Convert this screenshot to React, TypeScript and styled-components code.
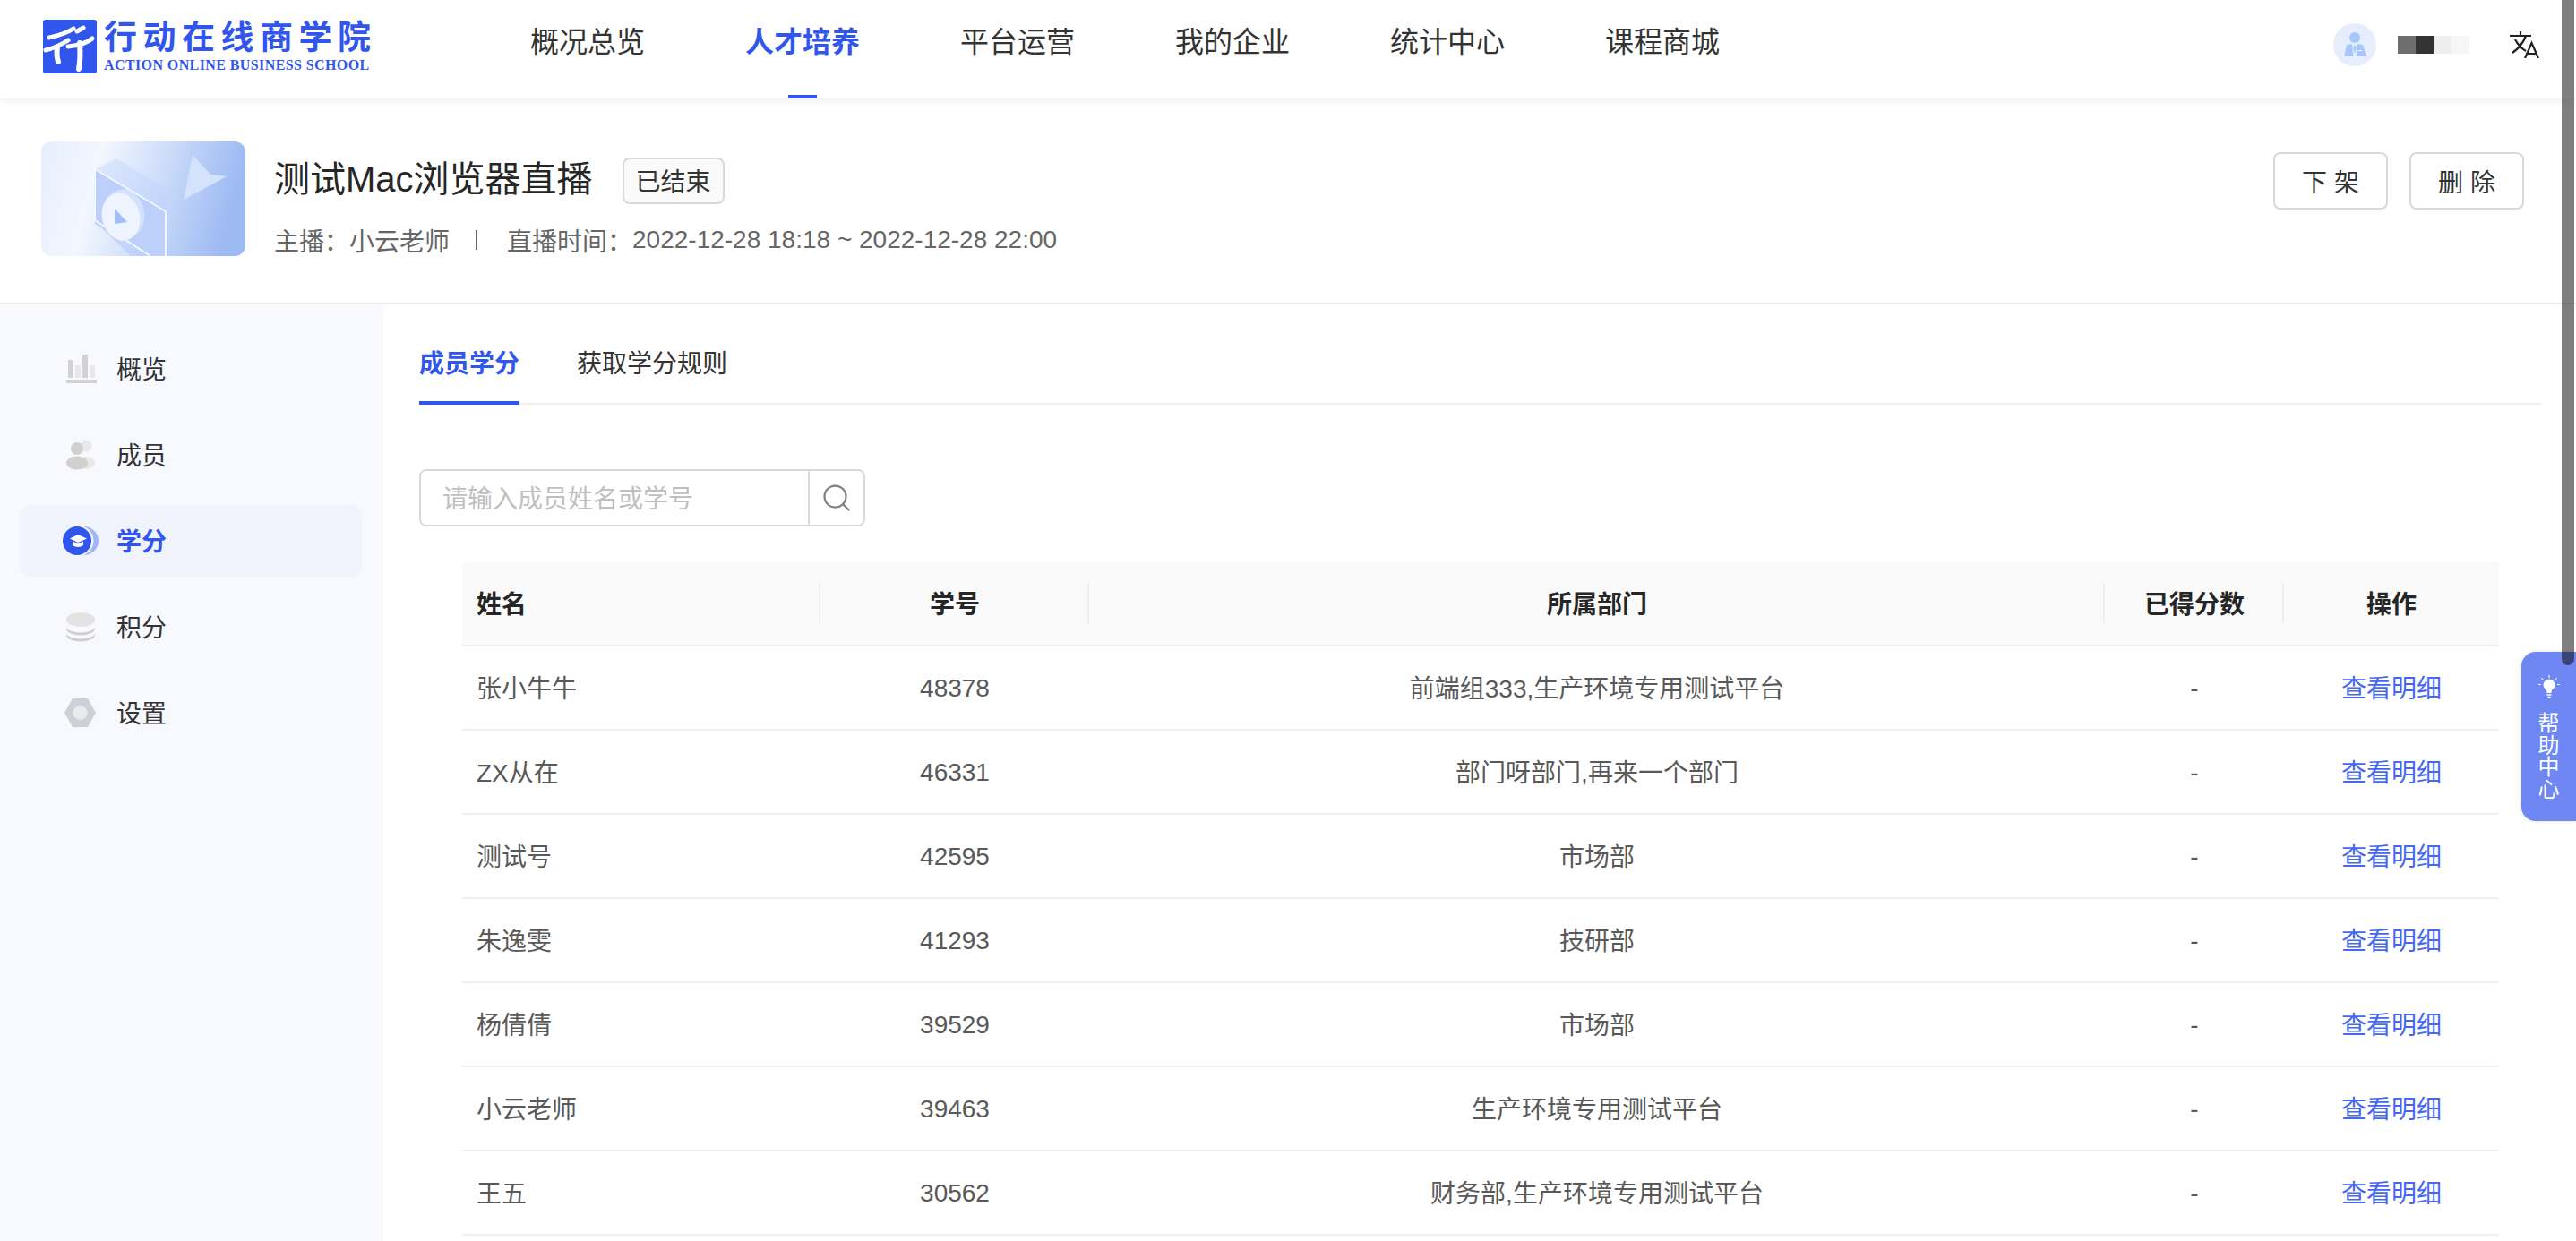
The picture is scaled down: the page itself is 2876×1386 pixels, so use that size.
import styled, { createGlobalStyle } from "styled-components";
import { Search } from "lucide-react";

const FONT = `"Liberation Sans", "Noto Sans CJK SC", sans-serif`;
const BLUE = "#3056ee";

const navItems = ["概况总览", "人才培养", "平台运营", "我的企业", "统计中心", "课程商城"];

const rows = [
  { name: "张小牛牛", no: "48378", dept: "前端组333,生产环境专用测试平台" },
  { name: "ZX从在", no: "46331", dept: "部门呀部门,再来一个部门" },
  { name: "测试号", no: "42595", dept: "市场部" },
  { name: "朱逸雯", no: "41293", dept: "技研部" },
  { name: "杨倩倩", no: "39529", dept: "市场部" },
  { name: "小云老师", no: "39463", dept: "生产环境专用测试平台" },
  { name: "王五", no: "30562", dept: "财务部,生产环境专用测试平台" },
];

function LogoMark() {
  return (
    <LogoSvg width="60" height="60" viewBox="0 0 60 60">
      <rect width="60" height="60" rx="3" fill={BLUE} />
      <g fill="none" stroke="#fff" strokeWidth="5" strokeLinecap="round">
        <path d="M7 20C15 18 25 16 34 10" />
        <path d="M3 34C12 32 20 28 28 23" />
        <path d="M16 30C15 38 16 44 17 47" strokeWidth="6" />
        <path d="M38 13L45 9" />
        <path d="M28 30C38 29 48 27 55 21" />
        <path d="M41 26C42 40 41 50 40 55" strokeWidth="6" />
      </g>
    </LogoSvg>
  );
}

function AvatarIcon() {
  return (
    <svg width="48" height="48" viewBox="0 0 48 48">
      <circle cx="24" cy="24" r="24" fill="#e6eefe" />
      <circle cx="24" cy="16" r="6" fill="#a9c6fb" />
      <path d="M15 24L21 23L22.500 37H12Z" fill="#a9c6fb" />
      <path d="M33 24L27 23L25.500 37H37Z" fill="#a9c6fb" />
      <path d="M24 24L26 27L24 34L22 27Z" fill="#a9c6fb" />
      <rect x="28" y="30" width="4" height="1" fill="#fff" />
    </svg>
  );
}

function TranslateIcon() {
  return (
    <svg width="34" height="30" viewBox="0 0 34 30" fill="none" stroke="#222" strokeWidth="2.2">
      <path d="M0 5H24M12 0V5" />
      <path d="M18 5C15 13 9 20 3 24" />
      <path d="M6 9C9 15 13 19 18 22" />
      <path d="M17 30L24.500 13L32 30M19.500 25H29.500" />
    </svg>
  );
}

function CoverArt() {
  return (
    <svg width="228" height="128" viewBox="0 0 228 128">
      <defs>
        <linearGradient id="coverBg" x1="0" y1="0" x2="1" y2="0.15">
          <stop offset="0" stopColor="#e6eefd" />
          <stop offset="0.3" stopColor="#f3f7fe" />
          <stop offset="0.6" stopColor="#cfdefa" />
          <stop offset="1" stopColor="#9dbaf3" />
        </linearGradient>
        <linearGradient id="coverFace" x1="0" y1="0" x2="1" y2="1">
          <stop offset="0" stopColor="#dfe9fd" />
          <stop offset="1" stopColor="#b4cbfa" />
        </linearGradient>
      </defs>
      <rect width="228" height="128" rx="12" fill="url(#coverBg)" />
      <path d="M60 31L84 19L139 52L143 128H100L60 90Z" fill="url(#coverFace)" />
      <path d="M60 31L139 79V128H122L60 92Z" fill="#bcd0fb" />
      <path d="M60 31L139 78V128M60 31V88L122 128" fill="none" stroke="#f3f7ff" strokeWidth="2" />
      <ellipse cx="94" cy="80" rx="21" ry="27" transform="rotate(-14 94 80)" fill="#d4e1fd" />
      <ellipse cx="89" cy="84" rx="21" ry="27" transform="rotate(-14 89 84)" fill="#eef4fe" />
      <path d="M82 75L96 90L82 92Z" fill="#a3bdf7" />
      <path d="M169 15L189 37L207 39L159 65Z" fill="#d5e2fc" />
    </svg>
  );
}

function BarsIcon() {
  return (
    <svg width="40" height="36" viewBox="0 0 40 36">
      <rect x="4" y="30" width="34" height="4" fill="#d2d2d2" />
      <rect x="6" y="8" width="6" height="20" fill="#d2d2d2" />
      <rect x="14" y="14" width="6" height="14" fill="#e8e8e8" />
      <rect x="22" y="2" width="6" height="26" fill="#d2d2d2" />
      <rect x="30" y="14" width="6" height="14" fill="#e8e8e8" />
    </svg>
  );
}

function MembersIcon() {
  return (
    <svg width="40" height="36" viewBox="0 0 40 36">
      <circle cx="26" cy="8" r="6.500" fill="#e9e9e9" />
      <ellipse cx="26" cy="27" rx="10" ry="7" fill="#e9e9e9" />
      <circle cx="16" cy="11" r="7" fill="#d0d0d0" />
      <ellipse cx="16" cy="27" rx="12" ry="7.500" fill="#d0d0d0" />
    </svg>
  );
}

function CreditIcon() {
  return (
    <svg width="40" height="36" viewBox="0 0 40 36">
      <circle cx="24" cy="18" r="16" fill="#a3b5f7" />
      <circle cx="17.500" cy="18" r="17" fill="#f1f4fd" />
      <circle cx="16" cy="18" r="16" fill={BLUE} />
      <path d="M17 11L27 15.500L17 20L8 15.500Z" fill="#fff" />
      <path d="M11 18.500V23C15 25.500 19 25.500 23 23V18.500L17 21.500Z" fill="#fff" />
    </svg>
  );
}

function CoinsIcon() {
  return (
    <svg width="40" height="36" viewBox="0 0 40 36">
      <ellipse cx="20" cy="27" rx="16" ry="7.500" fill="#d0d0d0" />
      <ellipse cx="20" cy="24.500" rx="16" ry="7" fill="#f8f9fe" />
      <ellipse cx="20" cy="20" rx="16" ry="7.500" fill="#d0d0d0" />
      <ellipse cx="20" cy="17.500" rx="16" ry="7" fill="#f8f9fe" />
      <ellipse cx="20" cy="10" rx="16" ry="8" fill="#e3e3e3" />
    </svg>
  );
}

function GearIcon() {
  return (
    <svg width="40" height="36" viewBox="0 0 40 36">
      <path d="M11 2H28L37 18L28 34H11L2 18Z" fill="#cdd0d9" />
      <circle cx="19.500" cy="18" r="8" fill="#e9eaee" />
    </svg>
  );
}

function BulbIcon() {
  return (
    <svg width="24" height="26" viewBox="0 0 24 26" fill="none" stroke="#fff" strokeWidth="1.200">
      <circle cx="12" cy="11" r="6.500" fill="#fff" stroke="none" />
      <path d="M9 15H15L14.500 20H9.500Z" fill="#fff" stroke="none" />
      <path d="M9.500 22H14.500M10.500 24.500H13.500" strokeWidth="1.500" />
      <path d="M12 0V3M3.500 3L5.500 5.500M20.500 3L18.500 5.500M0 10.500H3M21 10.500H24" />
    </svg>
  );
}

const sideItems = [
  { label: "概览", icon: <BarsIcon /> },
  { label: "成员", icon: <MembersIcon /> },
  { label: "学分", icon: <CreditIcon />, active: true },
  { label: "积分", icon: <CoinsIcon /> },
  { label: "设置", icon: <GearIcon /> },
];

export default function App() {
  return (
    <>
      <GlobalStyle />
      <Page>
        <TopBar>
          <Logo>
            <LogoMark />
            <LogoText>
              <LogoCn>行动在线商学院</LogoCn>
              <LogoEn>ACTION ONLINE BUSINESS SCHOOL</LogoEn>
            </LogoText>
          </Logo>
          <Nav>
            {navItems.map((item) => (
              <NavItem key={item} $active={item === "人才培养"}>
                {item}
              </NavItem>
            ))}
          </Nav>
          <UserArea>
            <AvatarIcon />
            <BlurName>
              <BlurCell $color="#6e6e6e" />
              <BlurCell $color="#333333" />
              <BlurCell $color="#eeeeee" />
              <BlurCell $color="#f6f6f6" />
            </BlurName>
            <TranslateBox>
              <TranslateIcon />
            </TranslateBox>
          </UserArea>
        </TopBar>

        <DetailHeader>
          <Cover>
            <CoverArt />
          </Cover>
          <Info>
            <TitleRow>
              <Title>测试Mac浏览器直播</Title>
              <StatusTag>已结束</StatusTag>
            </TitleRow>
            <Meta>
              <span>主播：小云老师</span>
              <MetaDivider />
              <span>直播时间：</span>
              <span>2022-12-28 18:18 ~ 2022-12-28 22:00</span>
            </Meta>
          </Info>
          <Actions>
            <ActionButton>下 架</ActionButton>
            <ActionButton>删 除</ActionButton>
          </Actions>
        </DetailHeader>

        <Body>
          <Sidebar>
            {sideItems.map((item) => (
              <SideItem key={item.label} $active={item.active}>
                {item.icon}
                <SideLabel $active={item.active}>{item.label}</SideLabel>
              </SideItem>
            ))}
          </Sidebar>

          <Content>
            <Tabs>
              <Tab $active>成员学分</Tab>
              <Tab>获取学分规则</Tab>
            </Tabs>

            <SearchBox>
              <SearchInput placeholder="请输入成员姓名或学号" />
              <SearchButton>
                <Search size={36} strokeWidth={1.5} color="#808080" />
              </SearchButton>
            </SearchBox>

            <Table>
              <HeadRow>
                <HeadCell $left>姓名</HeadCell>
                <HeadCell>学号</HeadCell>
                <HeadCell>所属部门</HeadCell>
                <HeadCell>已得分数</HeadCell>
                <HeadCell>操作</HeadCell>
              </HeadRow>
              {rows.map((row) => (
                <Row key={row.no}>
                  <Cell $left>{row.name}</Cell>
                  <NumberCell>{row.no}</NumberCell>
                  <Cell>{row.dept}</Cell>
                  <NumberCell>-</NumberCell>
                  <LinkCell>查看明细</LinkCell>
                </Row>
              ))}
            </Table>
          </Content>
        </Body>

        <HelpTab>
          <BulbIcon />
          <HelpText>帮助中心</HelpText>
        </HelpTab>
        <ScrollThumb />
      </Page>
    </>
  );
}

const GlobalStyle = createGlobalStyle`
  html, body {
    margin: 0;
    padding: 0;
    background: #fff;
    overflow: hidden;
  }

  * {
    box-sizing: border-box;
  }
`;

const Page = styled.div`
  position: relative;
  width: 2876px;
  height: 1386px;
  overflow: hidden;
  display: flex;
  flex-direction: column;
  font-family: ${FONT};
  color: #333;
  background: #fff;
`;

const TopBar = styled.header`
  position: relative;
  z-index: 2;
  flex: none;
  height: 110px;
  display: flex;
  padding: 0 40px 0 48px;
  background: #fff;
  box-shadow: 0 2px 8px rgba(0, 0, 0, 0.07);
`;

const Logo = styled.div`
  display: flex;
  align-items: flex-start;
  gap: 8px;
  padding-top: 22px;
  width: 366px;
  flex: none;
`;

const LogoSvg = styled.svg`
  flex: none;
`;

const LogoText = styled.div`
  display: flex;
  flex-direction: column;
  color: ${BLUE};
  white-space: nowrap;
`;

const LogoCn = styled.div`
  font-size: 37px;
  line-height: 42px;
  font-weight: 700;
  letter-spacing: 6.500px;
`;

const LogoEn = styled.div`
  font-family: "Liberation Serif", serif;
  font-size: 16px;
  line-height: 18px;
  font-weight: 700;
  letter-spacing: 0.400px;
`;

const Nav = styled.nav`
  display: flex;
  gap: 112px;
  margin-left: 178px;
`;

const NavItem = styled.div<{ $active?: boolean }>`
  position: relative;
  height: 110px;
  font-size: 32px;
  line-height: 94px;
  color: ${(props) => (props.$active ? BLUE : "#333")};
  font-weight: ${(props) => (props.$active ? 700 : 400)};

  &::after {
    content: "";
    display: ${(props) => (props.$active ? "block" : "none")};
    position: absolute;
    left: 48px;
    bottom: 0;
    width: 32px;
    height: 4px;
    background: ${BLUE};
  }
`;

const UserArea = styled.div`
  display: flex;
  align-items: center;
  margin-left: auto;
  height: 100px;
`;

const BlurName = styled.div`
  display: flex;
  margin-left: 24px;
`;

const BlurCell = styled.div<{ $color: string }>`
  width: 20px;
  height: 20px;
  background: ${(props) => props.$color};
`;

const TranslateBox = styled.div`
  display: flex;
  margin-left: 45px;
`;

const DetailHeader = styled.section`
  flex: none;
  height: 230px;
  display: flex;
  align-items: flex-start;
  padding: 48px 58px 0 46px;
  border-bottom: 2px solid #e8e8e8;
`;

const Cover = styled.div`
  width: 228px;
  height: 128px;
  flex: none;
  display: flex;
`;

const Info = styled.div`
  margin: 18px 0 0 32px;
`;

const TitleRow = styled.div`
  display: flex;
  align-items: center;
  height: 52px;
`;

const Title = styled.h1`
  margin: 0;
  padding-bottom: 3px;
  font-size: 40px;
  font-weight: 400;
  line-height: 49px;
  color: #262626;
`;

const StatusTag = styled.span`
  margin-left: 33px;
  width: 114px;
  height: 52px;
  display: flex;
  align-items: center;
  justify-content: center;
  padding-bottom: 2px;
  font-size: 28px;
  color: #333;
  background: #fafafa;
  border: 2px solid #d9d9d9;
  border-radius: 8px;
`;

const Meta = styled.div`
  display: flex;
  align-items: center;
  margin-top: 22px;
  height: 36px;
  font-size: 28px;
  color: #666;
  white-space: nowrap;
`;

const MetaDivider = styled.i`
  width: 2px;
  height: 22px;
  margin: 0 33px 0 29px;
  background: #666;
`;

const Actions = styled.div`
  display: flex;
  gap: 24px;
  margin: 12px 0 0 auto;
`;

const ActionButton = styled.button`
  width: 128px;
  height: 64px;
  padding: 0;
  font-family: ${FONT};
  font-size: 28px;
  color: #333;
  background: #fff;
  border: 2px solid #d9d9d9;
  border-radius: 8px;
  box-shadow: 0 2px 0 rgba(0, 0, 0, 0.02);
`;

const Body = styled.div`
  flex: 1;
  display: flex;
  min-height: 0;
`;

const Sidebar = styled.aside`
  flex: none;
  width: 428px;
  padding: 32px 24px 0 22px;
  display: flex;
  flex-direction: column;
  gap: 16px;
  background: #f8f9fe;
`;

const SideItem = styled.div<{ $active?: boolean }>`
  height: 80px;
  display: flex;
  align-items: center;
  gap: 20px;
  padding-left: 48px;
  border-radius: 12px;
  background: ${(props) => (props.$active ? "#f1f4fd" : "transparent")};
`;

const SideLabel = styled.span<{ $active?: boolean }>`
  padding-bottom: 3px;
  font-size: 28px;
  color: ${(props) => (props.$active ? BLUE : "#333")};
  font-weight: ${(props) => (props.$active ? 700 : 400)};
`;

const Content = styled.main`
  flex: 1;
  min-width: 0;
  padding: 0 39px 0 40px;
`;

const Tabs = styled.div`
  display: flex;
  gap: 64px;
  height: 112px;
  border-bottom: 2px solid #f0f0f0;
`;

const Tab = styled.div<{ $active?: boolean }>`
  height: 112px;
  padding-top: 42px;
  font-size: 28px;
  line-height: 50px;
  color: ${(props) => (props.$active ? BLUE : "#333")};
  font-weight: ${(props) => (props.$active ? 700 : 400)};
  border-bottom: 4px solid ${(props) => (props.$active ? BLUE : "transparent")};
`;

const SearchBox = styled.div`
  display: flex;
  width: 498px;
  height: 64px;
  margin-top: 72px;
  border: 2px solid #d9d9d9;
  border-radius: 8px;
  overflow: hidden;
`;

const SearchInput = styled.input`
  flex: 1;
  min-width: 0;
  height: 100%;
  padding: 4px 24px 0;
  border: 0;
  outline: 0;
  font-family: ${FONT};
  font-size: 28px;
  color: #333;

  &::placeholder {
    color: #bfbfbf;
  }
`;

const SearchButton = styled.div`
  flex: none;
  width: 62px;
  display: flex;
  align-items: center;
  justify-content: center;
  border-left: 2px solid #d9d9d9;
`;

const Table = styled.div`
  margin: 40px 47px 0 48px;
  font-size: 28px;
`;

const columns = "400px 300px 1134px 200px 240px";

const HeadRow = styled.div`
  display: grid;
  grid-template-columns: ${columns};
  height: 94px;
  align-items: center;
  background: #fafafa;
  border-bottom: 2px solid #f0f0f0;
`;

const HeadCell = styled.div<{ $left?: boolean }>`
  position: relative;
  padding-bottom: 3px;
  font-weight: 700;
  color: #262626;
  text-align: ${(props) => (props.$left ? "left" : "center")};
  padding-left: ${(props) => (props.$left ? "16px" : "0")};

  &:not(:last-child)::after {
    content: "";
    position: absolute;
    right: 0;
    top: 50%;
    width: 2px;
    height: 46px;
    margin-top: -23px;
    background: #efefef;
  }
`;

const Row = styled.div`
  display: grid;
  grid-template-columns: ${columns};
  height: 94px;
  align-items: center;
  border-bottom: 2px solid #f0f0f0;
`;

const Cell = styled.div<{ $left?: boolean }>`
  padding-bottom: 3px;
  color: #595959;
  text-align: ${(props) => (props.$left ? "left" : "center")};
  padding-left: ${(props) => (props.$left ? "16px" : "0")};
`;

const NumberCell = styled.div`
  padding-top: 2px;
  color: #595959;
  text-align: center;
`;

const LinkCell = styled.a`
  padding-bottom: 3px;
  color: #4668f0;
  text-align: center;
`;

const HelpTab = styled.div`
  position: absolute;
  z-index: 3;
  left: 2815px;
  top: 728px;
  width: 61px;
  height: 189px;
  display: flex;
  flex-direction: column;
  align-items: center;
  padding-top: 26px;
  color: #fff;
  background: #6e87f2;
  border-radius: 16px 0 0 16px;
  box-shadow: 0 0 4px rgba(0, 0, 0, 0.12);
`;

const HelpText = styled.div`
  width: 24px;
  margin-top: 16px;
  font-size: 24px;
  line-height: 24.500px;
  text-align: center;
`;

const ScrollThumb = styled.div`
  position: absolute;
  z-index: 4;
  left: 2860px;
  top: -20px;
  width: 14px;
  height: 763px;
  border-radius: 7px;
  background: rgba(0, 0, 0, 0.5);
`;
